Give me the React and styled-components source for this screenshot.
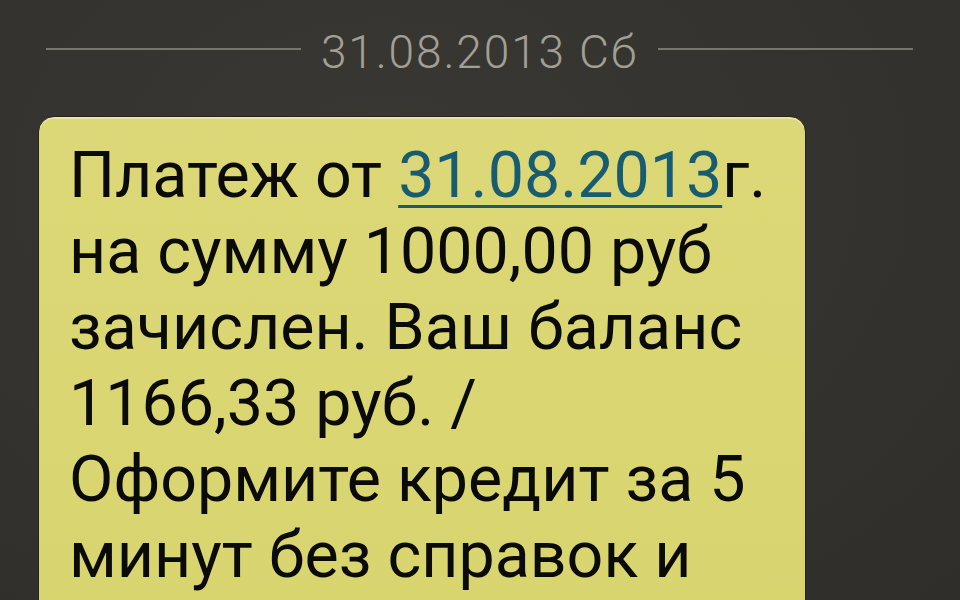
import styled, { createGlobalStyle } from "styled-components";

const GlobalStyle = createGlobalStyle`
    html, body {
        margin: 0;
        padding: 0;
        width: 960px;
        height: 600px;
        overflow: hidden;
        background: #36342f;
    }
`;

export default function App() {
    return (
        <>
            <GlobalStyle />
            <Screen>
                <DateRow>
                    <Rule />
                    <DateLabel>31.08.2013 Сб</DateLabel>
                    <Rule />
                </DateRow>
                <Bubble>
                    <Message>
                        Платеж от <DateLink>31.08.2013</DateLink>г.
                        <br />
                        на сумму 1000,00 руб
                        <br />
                        зачислен. Ваш баланс
                        <br />
                        1166,33 руб. /
                        <br />
                        Оформите кредит за 5
                        <br />
                        минут без справок и
                    </Message>
                </Bubble>
            </Screen>
        </>
    );
}

const Screen = styled.main`
    width: 960px;
    height: 600px;
    overflow: hidden;
    background: radial-gradient(ellipse at 40% 30%, #3a3833 0%, #34322e 60%, #302e2a 100%);
    font-family: Roboto, "Liberation Sans", sans-serif;
    padding: 20px 0 0 38px;
    box-sizing: border-box;
`;

const DateRow = styled.div`
    width: 867px;
    display: flex;
    align-items: center;
    gap: 20px;
    padding-left: 8px;
    height: 58px;
`;

const Rule = styled.div`
    flex: 1;
    height: 2px;
    background: #77756d;
`;

const DateLabel = styled.span`
    font-size: 46px;
    font-weight: 300;
    color: #a19f96;
    letter-spacing: 1.9px;
    line-height: 1;
    padding-top: 5px;
`;

const Bubble = styled.section`
    margin-top: 38px;
    width: 768px;
    height: 520px;
    box-sizing: border-box;
    background: linear-gradient(180deg, #dcd877 0%, #d8d46e 100%);
    border-radius: 16px;
    border: 1px solid #27251f;
    box-shadow: inset 0 2px 0 rgba(255, 255, 240, 0.35), inset 0 -1px 0 rgba(0, 0, 0, 0.1);
    padding: 20px 0 0 30px;
`;

const Message = styled.p`
    margin: 0;
    font-size: 64.5px;
    line-height: 76px;
    color: #0a0a06;
    white-space: nowrap;
`;

const DateLink = styled.span`
    color: #185c72;
    text-decoration: underline;
    text-decoration-thickness: 3px;
    text-underline-offset: 8px;
`;
